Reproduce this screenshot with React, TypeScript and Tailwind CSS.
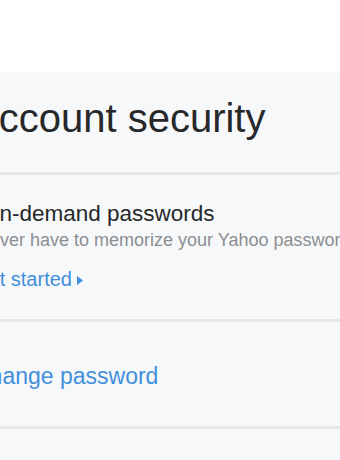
import React from "react";

const App = () => {
  return (
    <div className="w-[340px] h-[460px] overflow-hidden bg-white font-['Liberation_Sans',Arial,sans-serif]">
      <div className="h-[72px]" />
      <div className="bg-[#f7f8f9] w-[420px] h-[388px]">
        <h1 className="-ml-[28px] pt-[26px] pb-[34px] text-[40px] leading-[40px] text-[#26282a] whitespace-nowrap">
          Account security
        </h1>
        <div className="border-t-[3px] border-[#e4e6e7]" />
        <div className="pt-[27px] pb-[30px] flex flex-col whitespace-nowrap">
          <h2 className="-ml-[18px] text-[22.5px] leading-[23px] text-[#26282a]">On-demand passwords</h2>
          <p className="-ml-[23px] mt-[6px] text-[18px] leading-[18px] text-[#8b8e91]">
            Never have to memorize your Yahoo password again.
          </p>
          <a className="-ml-[27px] mt-[20px] text-[20px] leading-[20px] text-[#428fdc] flex items-center gap-[5px]">
            Get started
            <svg width="6" height="9" viewBox="0 0 6 9" className="mt-[2px]">
              <path d="M0 0 L6 4.5 L0 9 Z" fill="#428fdc" />
            </svg>
          </a>
        </div>
        <div className="border-t-[3px] border-[#e4e6e7]" />
        <div className="pt-[43px] pb-[38px] whitespace-nowrap">
          <a className="-ml-[27px] block text-[23px] leading-[23px] text-[#428fdc]">Change password</a>
        </div>
        <div className="border-t-[3px] border-[#e6e8e9]" />
      </div>
    </div>
  );
};

export default App;
